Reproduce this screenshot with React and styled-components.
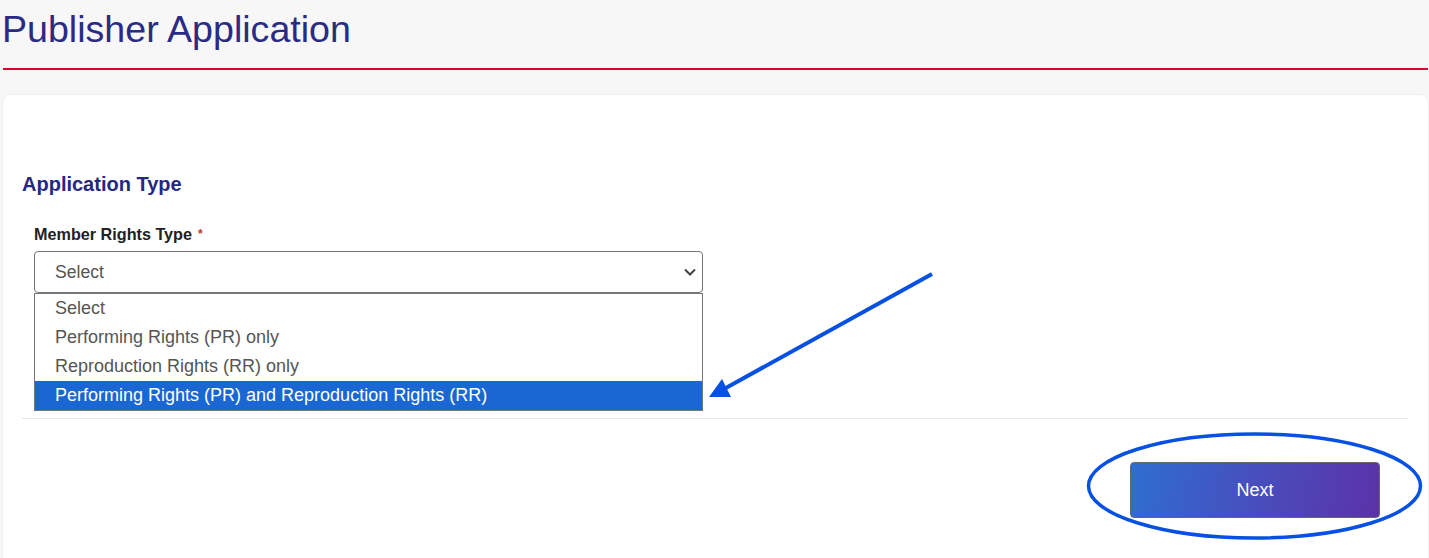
import React from "react";
import styled, { createGlobalStyle } from "styled-components";

const GlobalStyle = createGlobalStyle`
  html, body { margin: 0; padding: 0; background: #f7f7f7; }
  body { font-family: "Liberation Sans", Arial, sans-serif; overflow: hidden; }
  * { box-sizing: border-box; }
`;

const Page = styled.div`
  position: relative;
  padding: 8px 1px 0 3px;
  min-height: 558px;
`;

const Header = styled.header`
  border-bottom: 2px solid #e0002b;
  padding-bottom: 18px;
`;

const Title = styled.h1`
  margin: 0 0 0 -1px;
  font-size: 37.6px;
  font-weight: 400;
  line-height: 42px;
  color: #2b2b85;
`;

const Card = styled.section`
  margin-top: 25px;
  background: #fff;
  border-radius: 8px;
  box-shadow: 0 0 3px rgba(0, 0, 0, 0.08);
  padding: 78px 20px 80px 19px;
`;

const SectionTitle = styled.h2`
  margin: 0;
  font-size: 20px;
  font-weight: 700;
  line-height: 23px;
  color: #26287f;
`;

const Field = styled.div`
  margin-top: 29px;
  padding-left: 12px;
  width: 681px;
`;

const Label = styled.label`
  display: block;
  font-size: 16.2px;
  font-weight: 700;
  line-height: 19px;
  color: #222;
  margin-bottom: 7px;
`;

const Required = styled.span`
  color: #c0392b;
  font-size: 12px;
  vertical-align: top;
  margin-left: 6px;
`;

const SelectWrap = styled.div`
  position: relative;
`;

const SelectBox = styled.div`
  height: 42px;
  border: 1px solid #767676;
  border-radius: 4px;
  display: flex;
  align-items: center;
  justify-content: space-between;
  padding: 0 5px 0 20px;
  font-size: 17.6px;
  color: #555;
  background: #fff;
`;

const OptionList = styled.ul`
  position: absolute;
  top: 100%;
  left: 0;
  right: 0;
  margin: 0;
  padding: 0;
  list-style: none;
  border: 1px solid #767676;
  background: #fff;
  z-index: 2;
`;

const Option = styled.li`
  height: 29px;
  line-height: 29px;
  padding-left: 20px;
  font-size: 18px;
  color: ${(p) => (p.$selected ? "#fff" : "#555")};
  background: ${(p) => (p.$selected ? "#1a67d3" : "transparent")};
`;

const Divider = styled.hr`
  margin: 125px 0 0 0;
  border: 0;
  border-top: 1px solid #e6e6e6;
`;

const Actions = styled.div`
  display: flex;
  justify-content: flex-end;
  padding: 43px 28px 0 0;
`;

const NextButton = styled.button`
  width: 250px;
  height: 56px;
  border: 1px solid #666;
  border-radius: 4px;
  background: linear-gradient(100deg, #2e6ed0 0%, #4a4bbb 55%, #5b32a8 100%);
  color: #fff;
  font-family: "Liberation Sans", Arial, sans-serif;
  font-size: 18px;
  cursor: pointer;
`;

const Overlay = styled.svg`
  position: absolute;
  top: 0;
  left: 0;
  width: 1429px;
  height: 558px;
  pointer-events: none;
  z-index: 5;
`;

const Chevron = () => (
  <svg width="14" height="10" viewBox="0 0 14 10">
    <path d="M2 2.5 L7 7.5 L12 2.5" fill="none" stroke="#444" strokeWidth="2" />
  </svg>
);

const options = [
  "Select",
  "Performing Rights (PR) only",
  "Reproduction Rights (RR) only",
  "Performing Rights (PR) and Reproduction Rights (RR)",
];

export default function App() {
  return (
    <>
      <GlobalStyle />
      <Page>
        <Header>
          <Title>Publisher Application</Title>
        </Header>
        <Card>
          <SectionTitle>Application Type</SectionTitle>
          <Field>
            <Label>
              Member Rights Type<Required>*</Required>
            </Label>
            <SelectWrap>
              <SelectBox>
                <span>Select</span>
                <Chevron />
              </SelectBox>
              <OptionList>
                {options.map((o, i) => (
                  <Option key={o} $selected={i === 3}>
                    {o}
                  </Option>
                ))}
              </OptionList>
            </SelectWrap>
          </Field>
          <Divider />
          <Actions>
            <NextButton>Next</NextButton>
          </Actions>
        </Card>
        <Overlay viewBox="0 0 1429 558">
          <line x1="932" y1="274" x2="724" y2="389" stroke="#0651e3" strokeWidth="4" />
          <polygon points="709,397 722,379 731,397" fill="#0651e3" />
          <ellipse cx="1254.5" cy="486" rx="166" ry="52" fill="none" stroke="#0651e3" strokeWidth="3.5" />
        </Overlay>
      </Page>
    </>
  );
}
